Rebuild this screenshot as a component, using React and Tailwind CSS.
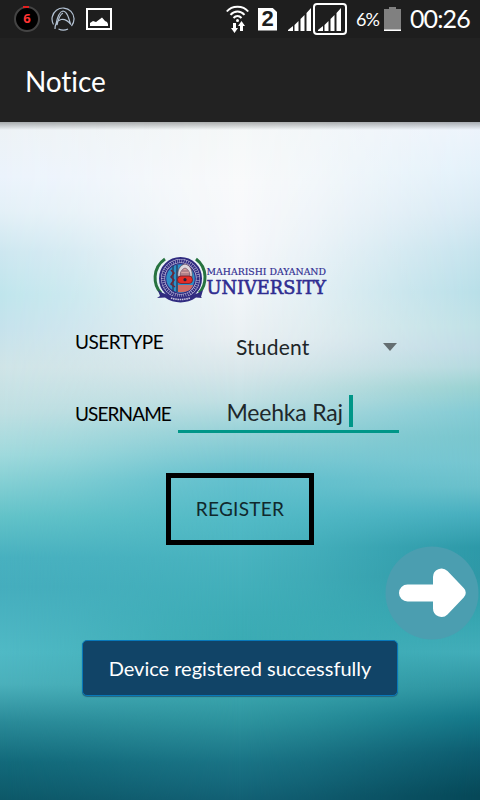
function Backdrop() {
  return (
    <div className="absolute inset-0 -z-10 overflow-hidden bg-[linear-gradient(180deg,#f5f8f8_0px,#f9fafb_60px,#f7f8fb_120px,#f1f5f8_175px,#eaf0f3_215px,#d9e7eb_248px,#bfdfe3_280px,#97d2d8_310px,#62c0ce_358px,#52bac6_398px,#48b3bf_438px,#3eadb7_490px,#3aabb3_530px,#3ba6ae_570px,#2d939e_600px,#1a7486_640px,#126074_678px)]">
      <div className="absolute inset-0 bg-[linear-gradient(180deg,#edf2f5_0px,#ebf3fc_55px,#e3f0f7_90px,#cde7f0_130px,#bfe5ec_173px,#c5e2ec_205px,#cfe4e7_245px,#bfdfe2_290px,#9fd9dc_333px,#62c2c8_395px,#48b0bf_435px,#45adbd_465px,#50b9c5_530px,#4bb0bb_562px,#2a8a98_600px,#12697a_640px,#0d5868_678px)] [mask-image:linear-gradient(90deg,black,rgba(0,0,0,0.75)_15%,rgba(0,0,0,0.25)_35%,transparent_50%)]" />
      <div className="absolute inset-0 bg-[linear-gradient(180deg,#eef4fc_0px,#e3f1fa_50px,#d8eaf4_90px,#c5e3ed_130px,#b8dfe8_170px,#c0e1e6_205px,#c0dce6_225px,#b5dadf_245px,#9ad2d2_265px,#84cbd4_290px,#79c6ce_315px,#76c6d1_340px,#6ac0cb_365px,#48afbf_392px,#2d99a8_425px,#2e98a6_455px,#36a5b0_495px,#42adb9_530px,#2f95a2_565px,#15798a_595px,#0d5d70_630px,#064858_673px)] [mask-image:linear-gradient(270deg,black,rgba(0,0,0,0.7)_15%,rgba(0,0,0,0.25)_35%,transparent_50%)]" />
      <div className="absolute inset-x-0 top-0 h-2 bg-gradient-to-b from-black/30 to-transparent" />
    </div>
  );
}

function Signal() {
  return (
    <svg className="h-[24px] w-[25px]" viewBox="0 0 25 24" fill="#fff">
      <path d="M0 24v-1l5-4v5zM6.500 24v-6l4-4v10zM12.500 24V12l4-4v16zM18.500 24V6l4.500-5v23z" />
    </svg>
  );
}

function StatusBar() {
  return (
    <div className="flex h-[38px] items-center bg-[#1e1e1e] text-white">
      <div className="ml-[14px] flex h-[26px] w-[26px] items-center justify-center rounded-full border-2 border-[#444] bg-black font-['Open_Sans'] text-[13px] font-bold text-[#f33] relative">
        6
        <i className="absolute -top-[2px] left-[7px] h-[2px] w-[6px] bg-[#e02020]" />
      </div>
      <svg className="ml-[11px] h-[24px] w-[24px]" viewBox="0 0 24 24" fill="none" stroke="#b4c3d4" strokeWidth="1.200">
        <path d="M2.500 17.500A11 11 0 1 1 20.500 19M7.500 22a11 11 0 0 0 9.500 0" />
        <path d="M4 22c0-5 2-8 6-9.500 4-1 7.500 2 10 5M4.500 19C6 11 8 4.500 12 4c4 .5 5.500 6 7.500 13M6 18C7.500 11 9.500 7 12 6" />
      </svg>
      <svg className="ml-[11px] h-[22px] w-[26px]" viewBox="0 0 26 22">
        <path d="M1 1h24v20H1z" fill="none" stroke="#fff" strokeWidth="2" />
        <path d="M4 18v-3l3-2 3 1 6-4.500 3 3.500 2 1 1 2v2z" fill="#fff" />
      </svg>
      <svg className="ml-[114px] h-[28px] w-[23px]" viewBox="0 0 23 28" fill="none" stroke="#fff" strokeWidth="2">
        <path d="M.8 6.500C6 0 17 0 22.200 6.500M4.500 9.800c4-4.500 10-4.500 14 0M7.500 13c2.500-2.800 5.500-2.800 8 0" />
        <circle cx="11.500" cy="15.500" r="1.500" fill="#fff" stroke="none" />
        <path d="M5 23h2v-5h3v5h2l-3.500 5zM12 21l3.500-5 3.500 5h-2v5h-3v-5z" fill="#fff" stroke="none" />
      </svg>
      <div className="ml-[9px] flex h-[23px] w-[19px] items-center justify-center bg-white font-['Liberation_Sans'] text-[22px] font-bold leading-none text-[#1e1e1e] [clip-path:polygon(0_0,75%_0,100%_20%,100%_100%,0_100%)]">2</div>
      <div className="ml-[11px] w-[25px]"><Signal /></div>
      <div className="flex h-[32px] w-[34px] items-center justify-center rounded border-2 border-white"><Signal /></div>
      <span className="ml-[9px] w-[25px] whitespace-nowrap text-[18px] tracking-[-1px]">6%</span>
      <svg className="ml-[3px] h-[24px] w-[17px]" viewBox="0 0 17 24">
        <path d="M5 0h7v2h5v22H0V2h5z" fill="#808080" />
        <path d="M0 22.500h17V24H0z" fill="#fff" />
      </svg>
      <span className="ml-[9px] whitespace-nowrap text-[25px] tracking-[-0.9px]">00:26</span>
    </div>
  );
}

function Logo() {
  return (
    <svg className="mx-auto h-[46px] w-[174px] overflow-visible" viewBox="0 0 174 46">
      <path d="M11 2C-2 11-1 28 7 36M42 2c12 9 11 26 3 34" fill="none" stroke="#27733f" strokeWidth="3" />
      <ellipse cx="26.500" cy="21.500" rx="20.500" ry="20.500" fill="#c9c6e0" stroke="#302b80" strokeWidth="2" />
      <circle cx="26.500" cy="21.500" r="17.500" fill="none" stroke="#302b80" strokeWidth="3" strokeDasharray="1.700 .5" />
      <circle cx="26.500" cy="21.500" r="14.800" fill="#2d8fc8" stroke="#302b80" strokeWidth="1.200" />
      <path d="M19 9v25M23 8v27" stroke="#263a55" strokeWidth="1.300" />
      <path d="M17 13l3 3-3 4 3 3-3 4 4 3" fill="none" stroke="#6d2534" strokeWidth="1.500" />
      <path d="M24 28h15c-1 5-7 8-15 7z" fill="#d26a63" />
      <path d="M24 20c-1-7 2-12 7-13 5 1 8 6 7 13z" fill="#ddd7dc" stroke="#5e3c50" strokeWidth=".7" />
      <path d="M26 19c0-4 2-7 5-8 3 1 5 4 5 8zM28 14h6M26 17h10" fill="#d8a2a2" stroke="#77576a" strokeWidth=".8" />
      <rect x="23.500" y="19" width="15" height="7.500" rx="3.500" fill="#e52d26" stroke="#68202d" strokeWidth=".8" />
      <circle cx="31" cy="22.700" r="1.600" fill="#26233c" />
      <path d="M4 33c12 9 33 9 45 0l-2 7 1 1-6-.5C33 47 20 47 11 40.500L3 41l3-2z" fill="#302b80" />
      <path d="M17 41c6 2 13 2 19 0" fill="none" stroke="#cac7df" strokeWidth="1.600" strokeDasharray="1.500 .7" />
      <g fill="#302d91" stroke="#302d91" fontFamily="DejaVu Serif, serif">
        <text x="52.500" y="18" fontSize="10" strokeWidth=".2" textLength="119.500" lengthAdjust="spacingAndGlyphs">MAHARISHI DAYANAND</text>
        <text x="52.500" y="37" fontSize="18.500" strokeWidth=".6" textLength="119.500" lengthAdjust="spacingAndGlyphs">UNIVERSITY</text>
      </g>
    </svg>
  );
}

export default function App() {
  return (
    <div className="relative flex h-[800px] w-[480px] flex-col overflow-hidden font-['Lato',sans-serif]">
      <StatusBar />
      <header className="flex h-[84px] items-center bg-[#222] pl-[25px] pt-[2px] text-[28px] tracking-[-0.1px] text-white">Notice</header>
      <main className="relative isolate flex-1 pt-[135px]">
        <Backdrop />
        <div className="mr-[-2px]"><Logo /></div>
        <div className="ml-[75px] mt-[19px] flex h-[48px] w-[324px] items-center text-[19px]">
          <label className="-mt-[8px] w-[103px] tracking-[-0.5px] text-black">USERTYPE</label>
          <div className="flex flex-1 items-center pl-[58px] pt-[2px] text-[21px] text-[#202628]">
            <span className="flex-1 tracking-[0.2px]">Student</span>
            <svg className="mr-[2px] h-[8px] w-[14px]" viewBox="0 0 14 8"><path d="M0 0h14L7 8z" fill="#646e71" /></svg>
          </div>
        </div>
        <div className="ml-[75px] mt-[18px] flex h-[45px] w-[324px] text-[19px]">
          <label className="w-[103px] pt-[12px] leading-[28px] tracking-[-0.9px] text-black">USERNAME</label>
          <div className="flex flex-1 justify-center border-b-[3px] border-[#009688] text-[23px] text-[#1e282b]">
            <span className="whitespace-pre pl-[2px] pt-[8px] leading-[32px] tracking-[-0.2px]">Meehka Raj </span>
            <i className="mt-[7px] h-[32px] w-[4px] bg-[#009688]" />
          </div>
        </div>
        <button className="mx-auto mt-[40px] flex h-[72px] w-[148px] items-center justify-center border-[5px] border-black text-[19px] tracking-[0.3px] text-[#10282c]">REGISTER</button>
        <svg className="absolute left-[385px] top-[424px] h-[94px] w-[94px]" viewBox="0 0 94 94">
          <circle cx="47" cy="47" r="46.500" fill="#4b9eb0" />
          <path d="M22.500 38.500H48V31a8.500 8.500 0 0 1 14.500-6l16.200 17a6.500 6.500 0 0 1 0 9.500L62.500 68.500A8.500 8.500 0 0 1 48 62.500V55.500H22.500a8.500 8.500 0 0 1 0-17z" fill="#fff" />
        </svg>
        <div className="absolute left-[82px] top-[518px] flex h-[56px] w-[316px] items-center justify-center rounded-[5px] border border-[#0878b9] bg-[#114467] text-[20px] text-white shadow-[0_1px_1px_#24657d]">Device registered successfully</div>
      </main>
    </div>
  );
}
